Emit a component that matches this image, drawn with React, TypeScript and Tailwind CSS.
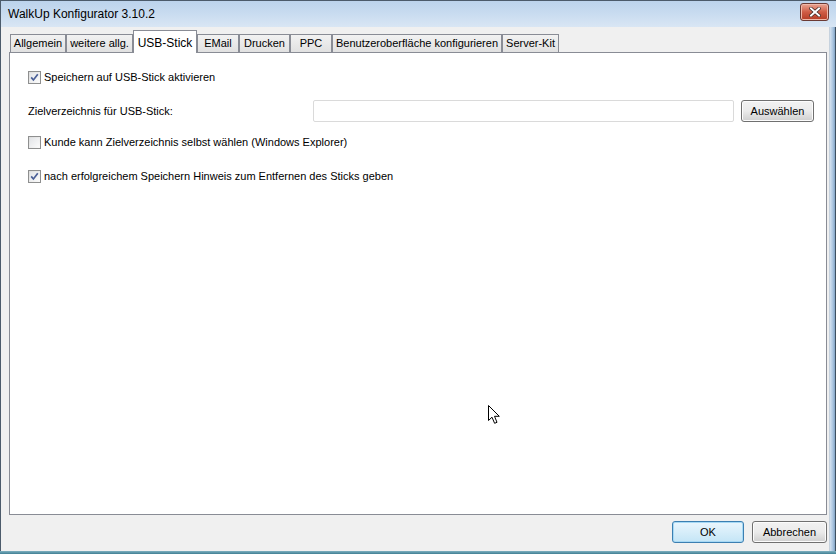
import React from "react";

const tabs = [
  { label: "Allgemein", w: "w-[56px]" },
  { label: "weitere allg.", w: "w-[67px]" },
  { label: "USB-Stick", w: "w-[64px]", active: true },
  { label: "EMail", w: "w-[42px]" },
  { label: "Drucken", w: "w-[51px]" },
  { label: "PPC", w: "w-[42px]" },
  { label: "Benutzeroberfläche konfigurieren", w: "w-[170px]" },
  { label: "Server-Kit", w: "w-[57px]" },
];

function CheckBox({ checked }: { checked?: boolean }) {
  return (
    <span className="flex h-[13px] w-[13px] shrink-0 items-center justify-center border border-[#8e8f8f] bg-gradient-to-br from-[#dcdcdc] to-[#fbfbfb]">
      <span className="flex h-[9px] w-[9px] items-center justify-center bg-gradient-to-br from-[#e3e5e8] to-[#fafafa]">
        {checked && (
          <svg width="9" height="9" viewBox="0 0 9 9">
            <path d="M1.2 4.4 L3.4 7 L7.8 1.2" fill="none" stroke="#4a5f97" strokeWidth="1.7" />
          </svg>
        )}
      </span>
    </span>
  );
}

function Check({ checked, label, className }: { checked?: boolean; label: string; className?: string }) {
  return (
    <div className={"flex items-center gap-[3px] " + (className ?? "")}>
      <CheckBox checked={checked} />
      <span className="leading-[13px]">{label}</span>
    </div>
  );
}

function WinButton({ label, w, primary }: { label: string; w: string; primary?: boolean }) {
  return (
    <button
      className={
        "flex h-[22px] items-center justify-center rounded-[3px] border text-[11px] text-black " +
        w +
        (primary
          ? " border-[#3c7fb1] bg-gradient-to-b from-[#eaf6fd] to-[#c4e5f6] shadow-[inset_0_0_0_1px_#a7d9f5]"
          : " border-[#707070] bg-gradient-to-b from-[#f2f2f2] via-[#ebebeb] to-[#cfcfcf] shadow-[inset_0_0_0_1px_#fcfcfc]")
      }
    >
      {label}
    </button>
  );
}

export default function App() {
  return (
    <div
      className="relative flex h-[554px] w-[836px] flex-col overflow-hidden bg-[#f0f0f0] text-[11px] text-black"
      style={{ fontFamily: '"Liberation Sans", Arial, sans-serif' }}
    >
      {/* title bar */}
      <div className="flex h-[27px] shrink-0 items-center justify-between border-l border-t border-[#4c5b6b] bg-gradient-to-b from-[#bcd3ec] via-[#c9dcf0] to-[#d9e6f4] pl-[7px] pr-[7px]">
        <span className="text-[12px] text-black">WalkUp Konfigurator 3.10.2</span>
        <button className="mt-[-4px] flex h-[18px] w-[29px] items-center justify-center rounded-[3px] border border-[#6b3a34] bg-gradient-to-b from-[#e8a493] via-[#cf5c45] to-[#b53c25] shadow-[inset_0_0_0_1px_#f0b8a8]">
          <svg width="12" height="10" viewBox="0 0 12 10">
            <path d="M2 1.5 L10 8.5 M10 1.5 L2 8.5" stroke="#3a2420" strokeWidth="3.4" strokeLinecap="square" />
            <path d="M2 1.5 L10 8.5 M10 1.5 L2 8.5" stroke="#ffffff" strokeWidth="2" strokeLinecap="square" />
          </svg>
        </button>
      </div>

      <div className="flex min-h-0 flex-1">
        {/* client area */}
        <div className="flex min-w-0 flex-1 flex-col border-l border-[#4c5b6b] pl-[8px] pr-[2px]">
          {/* tab row */}
          <div className="flex h-[25px] shrink-0 items-end pl-[1px]">
            {tabs.map((t) =>
              t.active ? (
                <div
                  key={t.label}
                  className={"relative z-10 -mb-[1px] flex h-[23px] items-start justify-center border border-b-0 border-[#898c95] bg-white pt-[3px] text-[12px] " + t.w}
                >
                  {t.label}
                </div>
              ) : (
                <div
                  key={t.label}
                  className={"flex h-[18px] items-center justify-center border border-b-0 border-[#898c95] bg-gradient-to-b from-[#f2f2f2] to-[#e1e1e1] " + t.w}
                >
                  {t.label}
                </div>
              )
            )}
          </div>

          {/* tab page */}
          <div className="relative flex min-h-0 flex-1 flex-col border border-[#898c95] bg-white pl-[18px] pt-[18px]">
            <Check checked label="Speichern auf USB-Stick aktivieren" />

            <div className="mt-[16px] flex items-center">
              <span className="w-[285px]">Zielverzeichnis für USB-Stick:</span>
              <div className="h-[22px] w-[421px] rounded-[2px] border border-[#dadada] bg-white" />
              <div className="ml-[7px]">
                <WinButton label="Auswählen" w="w-[73px]" />
              </div>
            </div>

            <Check label="Kunde kann Zielverzeichnis selbst wählen (Windows Explorer)" className="mt-[14px]" />
            <Check checked label="nach erfolgreichem Speichern Hinweis zum Entfernen des Sticks geben" className="mt-[21px]" />

            {/* mouse pointer */}
            <svg className="absolute left-[478px] top-[352px]" width="13" height="20" viewBox="0 0 13 20">
              <path
                d="M0.5 0.5 L0.5 15.5 L4 12.2 L6.6 18.3 L9 17.3 L6.5 11.3 L11.3 11.3 Z"
                fill="#ffffff"
                stroke="#000000"
                strokeWidth="1"
                strokeLinejoin="miter"
              />
            </svg>
          </div>

          {/* buttons */}
          <div className="flex h-[36px] shrink-0 items-center justify-end gap-[8px] pb-[2px]">
            <WinButton label="OK" w="w-[72px]" primary />
            <WinButton label="Abbrechen" w="w-[75px]" />
          </div>
        </div>

        {/* right frame */}
        <div className="w-[7px] shrink-0 border-l border-[#c6d2de] bg-gradient-to-r from-[#d6e3f0] via-[#a9c4df] to-[#6f93b8] shadow-[inset_-1px_0_0_#3e5060]" />
      </div>

      {/* bottom frame */}
      <div className="h-[3px] shrink-0 bg-gradient-to-b from-[#7fb0c0] to-[#3f7f93]" />
    </div>
  );
}
